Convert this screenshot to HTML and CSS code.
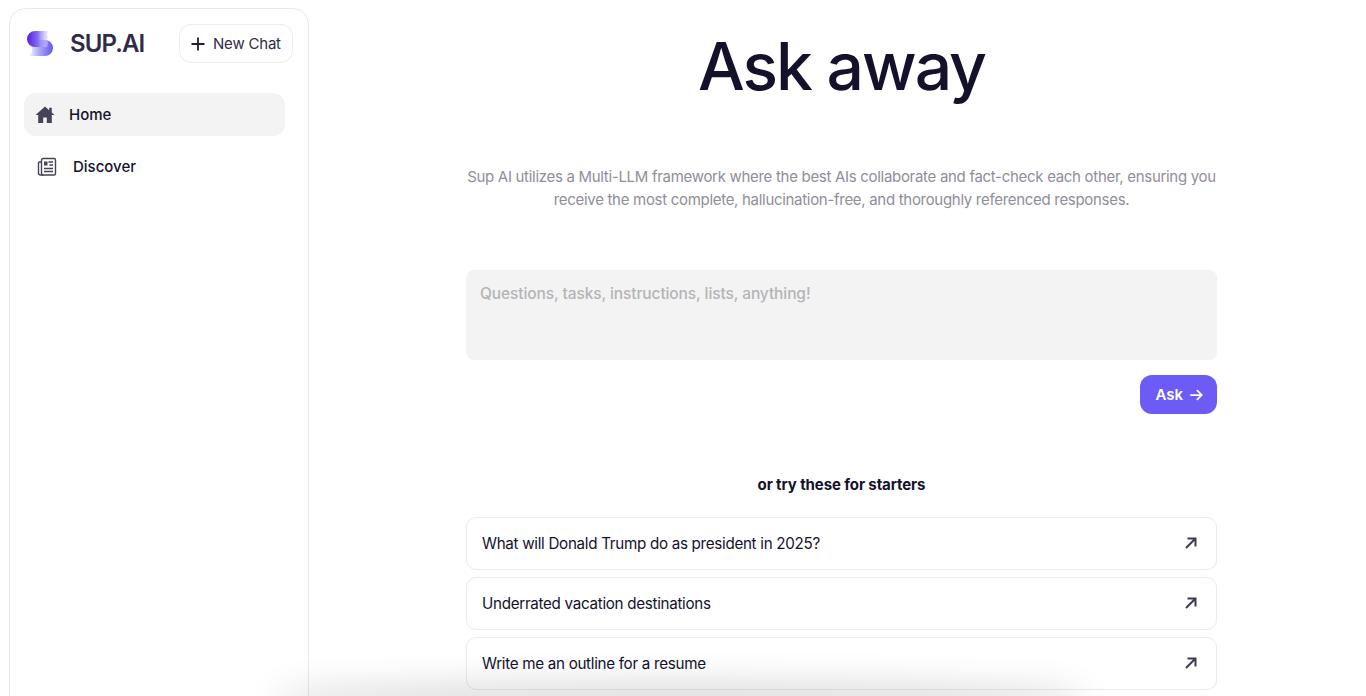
FILE: index.html
```html
<!DOCTYPE html>
<html lang="en">
<head>
    <meta charset="UTF-8">
    <title>Sup AI</title>
    <link rel="stylesheet" href="styles.css">
</head>
<body>
    <div class="app">
        <aside class="sidebar">
            <div class="sidebar-top">
                <div class="brand">
                    <svg class="logo" viewBox="0 0 26 25">
                        <defs>
                            <linearGradient id="logoTop" x1="0" y1="0" x2="1" y2="0">
                                <stop offset="0" stop-color="#5a1de6"/>
                                <stop offset="0.5" stop-color="#7f6cf0"/>
                                <stop offset="1" stop-color="#d6d4fa" stop-opacity="0.5"/>
                            </linearGradient>
                            <linearGradient id="logoBottom" x1="0" y1="0" x2="1" y2="0">
                                <stop offset="0" stop-color="#ffffff"/>
                                <stop offset="0.4" stop-color="#b5b1f6"/>
                                <stop offset="1" stop-color="#6355ee"/>
                            </linearGradient>
                        </defs>
                        <path d="M1 9h17a7.5 7.5 0 0 1 0 16H1c2-1 3-3 4-5 1-4-1-8-4-11z" fill="url(#logoBottom)"/>
                        <path d="M8 0h13l-1 3 1 3-1 3 1 3-1 4H8A8 8 0 0 1 8 0z" fill="url(#logoTop)"/>
                    </svg>
                    <span class="brand-name">SUP.AI</span>
                </div>
                <button class="new-chat">
                    <svg class="new-chat-icon" viewBox="0 0 14 14"><path d="M7 0.5v13M0.5 7h13"/></svg>
                    New Chat
                </button>
            </div>
            <nav class="nav">
                <a class="nav-item active">
                    <svg class="nav-icon" viewBox="0 0 20 20"><path d="M10 1.5 0.5 10H3.2v8h5V12.5h3.6V18h5v-8h2.7L16.8 7.6V2.8h-2.6v2.5z"/></svg>
                    Home
                </a>
                <a class="nav-item discover">
                    <svg class="nav-icon news" viewBox="0 0 20 20">
                        <rect x="4.5" y="1.5" width="14" height="16.5" rx="1.5"/>
                        <path d="M4.5 5H2.5A1 1 0 0 0 1.5 6v10a2 2 0 0 0 2 2h3"/>
                        <path d="M11.5 5h4.5M12.5 8h3.5M7 11.5h9M7 14.5h9"/>
                        <rect class="news-pic" x="7" y="4.5" width="3.5" height="4"/>
                    </svg>
                    Discover
                </a>
            </nav>
        </aside>

        <main class="main">
            <h1 class="title">Ask away</h1>
            <p class="intro">Sup AI utilizes a Multi-LLM framework where the best AIs collaborate and fact-check each other, ensuring you receive the most complete, hallucination-free, and thoroughly referenced responses.</p>
            <textarea class="ask-input" placeholder="Questions, tasks, instructions, lists, anything!"></textarea>
            <div class="ask-row">
                <button class="ask-btn">
                    Ask
                    <svg class="ask-icon" viewBox="0 0 16 16"><path d="M1.5 8h13M9 2.5 14.5 8 9 13.5"/></svg>
                </button>
            </div>
            <h2 class="starters">or try these for starters</h2>
            <div class="suggestions">
                <a class="suggestion">What will Donald Trump do as president in 2025?
                    <svg class="arrow" viewBox="0 0 12 12"><path d="M1 11 10.5 1.5M2.5 1.5h8v8"/></svg>
                </a>
                <a class="suggestion">Underrated vacation destinations
                    <svg class="arrow" viewBox="0 0 12 12"><path d="M1 11 10.5 1.5M2.5 1.5h8v8"/></svg>
                </a>
                <a class="suggestion">Write me an outline for a resume
                    <svg class="arrow" viewBox="0 0 12 12"><path d="M1 11 10.5 1.5M2.5 1.5h8v8"/></svg>
                </a>
            </div>
        </main>
    </div>
    <div class="bottom-shadow"></div>
</body>
</html>
```

FILE: styles.css
```css
* {
    box-sizing: border-box;
    margin: 0;
    padding: 0;
}
html, body {
    height: 100%;
    overflow: hidden;
}
body {
    font-family: Inter, "Noto Sans", sans-serif;
    background-color: #fff;
    color: #14122b;
}
.app {
    display: flex;
    height: 100%;
    padding: 8px 0 0 9px;
}
.sidebar {
    width: 300px;
    flex-shrink: 0;
    height: 720px;
    border: 1px solid #e8e8ea;
    border-radius: 16px;
    padding: 15px 15px 0 14px;
}
.sidebar-top {
    display: flex;
    justify-content: space-between;
    align-items: center;
}
.brand {
    display: flex;
    align-items: center;
    gap: 17px;
    padding-left: 3px;
}
.logo {
    width: 26px;
    height: 25px;
    margin-top: -1px;
}
.brand-name {
    font-size: 24px;
    font-weight: 600;
    letter-spacing: -0.9px;
    color: #2f2c47;
}
.new-chat {
    display: flex;
    align-items: center;
    gap: 8px;
    height: 39px;
    width: 114px;
    padding-left: 11px;
    background: #fff;
    border: 1px solid #ececee;
    border-radius: 12px;
    font-family: inherit;
    font-size: 15px;
    letter-spacing: -0.2px;
    color: #2f2c47;
}
.new-chat-icon {
    width: 14px;
    height: 14px;
    fill: none;
    stroke: #1f1c36;
    stroke-width: 1.8;
}
.nav {
    margin-top: 30px;
    width: 261px;
}
.nav-item {
    display: flex;
    align-items: center;
    gap: 14px;
    height: 43px;
    padding-left: 11px;
    border-radius: 12px;
    font-size: 15px;
    font-weight: 500;
    color: #14122b;
}
.nav-item.active {
    background: #f3f3f3;
}
.nav-item.discover {
    margin-top: 9px;
    padding-left: 13px;
    gap: 16px;
}
.nav-icon {
    width: 20px;
    height: 20px;
    fill: #45425a;
}
.nav-icon.news {
    fill: none;
    stroke: #45425a;
    stroke-width: 1.4;
}
.news-pic {
    fill: #45425a;
    stroke: none;
}
.main {
    width: 751px;
    margin-left: 157px;
    display: flex;
    flex-direction: column;
}
.title {
    margin-top: 14px;
    font-size: 66px;
    line-height: 88px;
    font-weight: 500;
    letter-spacing: -2px;
    text-align: center;
    color: #14122b;
}
.intro {
    margin-top: 55px;
    font-size: 15px;
    line-height: 23px;
    letter-spacing: -0.3px;
    text-align: center;
    color: #8f8e99;
}
.ask-input {
    display: block;
    margin-top: 59px;
    height: 90px;
    padding: 14px 14px;
    background: #f3f3f3;
    border: none;
    border-radius: 8px;
    resize: none;
    font-family: inherit;
    font-size: 15.5px;
    letter-spacing: -0.1px;
    font-weight: 500;
}
.ask-input::placeholder {
    color: #b4b4b8;
    opacity: 1;
}
.ask-row {
    display: flex;
    justify-content: flex-end;
    margin-top: 15px;
}
.ask-btn {
    display: flex;
    align-items: center;
    gap: 6px;
    height: 39px;
    padding: 0 14px 0 15px;
    background: #6d5bf6;
    border: none;
    border-radius: 12px;
    font-family: inherit;
    font-size: 15px;
    font-weight: 600;
    color: #fff;
}
.ask-icon {
    width: 14px;
    height: 14px;
    fill: none;
    stroke: #fff;
    stroke-width: 2;
}
.starters {
    margin-top: 61px;
    font-size: 15px;
    line-height: 20px;
    font-weight: 700;
    letter-spacing: -0.1px;
    text-align: center;
    color: #14122b;
}
.suggestions {
    margin-top: 22px;
    display: flex;
    flex-direction: column;
    gap: 7px;
}
.suggestion {
    display: flex;
    justify-content: space-between;
    align-items: center;
    height: 53px;
    padding: 0 19px 0 15px;
    background: #fff;
    border: 1.5px solid #ebebed;
    border-radius: 10px;
    font-size: 15.2px;
    letter-spacing: -0.3px;
    color: #14122b;
}
.arrow {
    width: 12px;
    height: 12px;
    margin-bottom: 2px;
    fill: none;
    stroke: #3d3a52;
    stroke-width: 2;
}
.bottom-shadow {
    position: fixed;
    left: 290px;
    bottom: -8px;
    width: 780px;
    height: 8px;
    box-shadow: 0 0 34px 12px rgba(0, 0, 0, 0.16);
    border-radius: 50%;
    pointer-events: none;
}
```
